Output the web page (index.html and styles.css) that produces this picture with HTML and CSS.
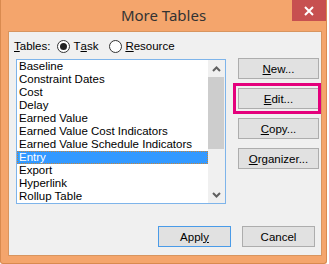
FILE: index.html
```html
<!DOCTYPE html>
<html>
<head>
<meta charset="utf-8">
<link rel="stylesheet" href="styles.css">
</head>
<body>
<div class="window">
  <div class="titlebar">
    <span></span>
    <span class="title">More Tables</span>
    <span class="close-wrap"><span class="close"><svg width="10" height="10" viewBox="0 0 10 10"><path d="M1 1L9 9M9 1L1 9" stroke="#fff" stroke-width="2"/></svg></span></span>
  </div>
  <div class="panel">
    <div class="tables-row">
      <span class="label"><u>T</u>ables:</span>
      <label class="radio"><span class="circle checked"></span>T<u>a</u>sk</label>
      <label class="radio"><span class="circle"></span><u>R</u>esource</label>
    </div>
    <div class="main">
      <div class="listbox">
        <ul class="items">
          <li>Baseline</li>
          <li>Constraint Dates</li>
          <li>Cost</li>
          <li>Delay</li>
          <li>Earned Value</li>
          <li>Earned Value Cost Indicators</li>
          <li>Earned Value Schedule Indicators</li>
          <li class="selected">Entry</li>
          <li>Export</li>
          <li>Hyperlink</li>
          <li>Rollup Table</li>
        </ul>
        <div class="scrollbar">
          <span class="arrow"><svg width="9" height="6" viewBox="0 0 9 6"><path d="M1 5L4.5 1.5L8 5" fill="none" stroke="#606060" stroke-width="2"/></svg></span>
          <span class="thumb"></span>
          <span class="track"></span>
          <span class="arrow"><svg width="9" height="6" viewBox="0 0 9 6"><path d="M1 1L4.5 4.5L8 1" fill="none" stroke="#606060" stroke-width="2"/></svg></span>
        </div>
      </div>
      <div class="side">
        <button class="btn"><u>N</u>ew...</button>
        <div class="mark-wrap">
          <button class="btn"><u>E</u>dit...</button>
          <span class="mark"></span>
        </div>
        <button class="btn"><u>C</u>opy...</button>
        <button class="btn"><u>O</u>rganizer...</button>
      </div>
    </div>
    <div class="footer">
      <button class="btn wide default">Appl<u>y</u></button>
      <button class="btn wide">Cancel</button>
    </div>
  </div>
</div>
</body>
</html>
```
FILE: styles.css
```css
* { box-sizing: border-box; }
html, body { margin: 0; padding: 0; background: #fff; }
body {
  font-family: "Liberation Sans", Arial, sans-serif;
  font-size: 11.5px;
  color: #000;
}
.window {
  width: 327px;
  height: 264px;
  background: #F4A56C;
  border: 1px solid #D98A4F;
  border-top: none;
  border-radius: 0 0 3px 3px;
  display: flex;
  flex-direction: column;
}
.titlebar {
  height: 31px;
  display: grid;
  grid-template-columns: 1fr auto 1fr;
  align-items: start;
}
.title {
  font-family: "Noto Sans", sans-serif;
  font-size: 15px;
  color: #333;
  line-height: 20px;
  padding-top: 5px;
}
.close-wrap { display: flex; justify-content: flex-end; }
.close {
  width: 34px;
  height: 21px;
  background: #C75050;
  display: flex;
  align-items: center;
  justify-content: center;
}
.close svg { display: block; }
.panel {
  margin-left: 7px;
  width: 314px;
  height: 225px;
  background: #F0F0F0;
  border: 1px solid #D8955F;
  display: flex;
  flex-direction: column;
}
.tables-row {
  display: flex;
  align-items: center;
  height: 16px;
  margin-top: 6px;
  padding-left: 5px;
  line-height: 16px;
}
.label { margin-right: 7px; }
.radio {
  display: flex;
  align-items: center;
  margin-right: 11px;
}
.circle {
  width: 13px;
  height: 13px;
  border-radius: 50%;
  border: 1px solid #333;
  background: #fff;
  margin-right: 3px;
  display: flex;
  align-items: center;
  justify-content: center;
}
.circle.checked::after {
  content: "";
  width: 7px;
  height: 7px;
  border-radius: 50%;
  background: #222;
}
.main {
  display: flex;
  margin-top: 4px;
}
.listbox {
  margin-left: 7px;
  margin-top: 1px;
  width: 210px;
  height: 145px;
  border: 1px solid #7EB4EA;
  background: #fff;
  display: flex;
}
.items {
  list-style: none;
  margin: 0;
  padding: 0;
  flex: 1;
}
.items li {
  height: 13px;
  line-height: 13px;
  padding-left: 2px;
  white-space: nowrap;
}
.items li.selected {
  background: #3399FF;
  color: #fff;
  outline: 1px dotted #C8863A;
  outline-offset: -1px;
}
.scrollbar {
  width: 17px;
  background: #F0F0F0;
  display: flex;
  flex-direction: column;
}
.arrow {
  height: 17px;
  display: flex;
  align-items: center;
  justify-content: center;
}
.arrow svg { display: block; }
.thumb {
  height: 72px;
  margin: 0 1px 0 0;
  background: #CDCDCD;
}
.track { flex: 1; }
.side {
  margin-left: 12px;
  display: flex;
  flex-direction: column;
  gap: 9px;
}
.btn {
  font-family: inherit;
  font-size: 11.5px;
  color: #000;
  width: 81px;
  height: 21px;
  padding: 0;
  background: #E1E1E1;
  border: 1px solid #ADADAD;
  border-radius: 0;
  line-height: 18px;
}
.mark-wrap { position: relative; height: 21px; }
.mark {
  position: absolute;
  left: -5px;
  top: -5px;
  width: 88px;
  height: 31px;
  border: 3px solid #E4007C;
}
.footer {
  margin-top: auto;
  margin-bottom: 8px;
  display: flex;
  justify-content: flex-end;
  gap: 11px;
  padding-right: 6px;
}
.btn.wide { width: 73px; }
.btn.default { border-color: #4A9BE8; }
```
